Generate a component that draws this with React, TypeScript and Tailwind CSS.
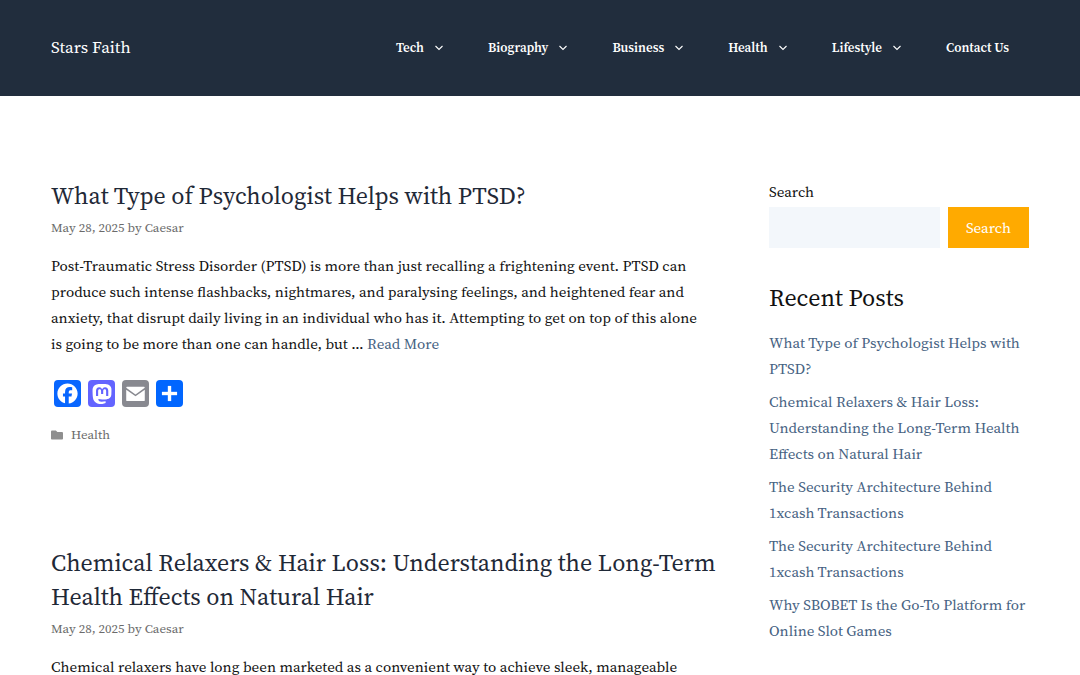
import type { ReactNode } from "react";
import { FaFolder } from "react-icons/fa";
import { SiMastodon } from "react-icons/si";

type Post = {
  title: string;
  date: string;
  author: string;
  excerpt: string;
  category?: string;
};

const menu = [
  { label: "Tech", sub: true },
  { label: "Biography", sub: true },
  { label: "Business", sub: true },
  { label: "Health", sub: true },
  { label: "Lifestyle", sub: true },
  { label: "Contact Us", sub: false },
];

const posts: Post[] = [
  {
    title: "What Type of Psychologist Helps with PTSD?",
    date: "May 28, 2025",
    author: "Caesar",
    excerpt:
      "Post-Traumatic Stress Disorder (PTSD) is more than just recalling a frightening event. PTSD can produce such intense flashbacks, nightmares, and paralysing feelings, and heightened fear and anxiety, that disrupt daily living in an individual who has it. Attempting to get on top of this alone is going to be more than one can handle, but …",
    category: "Health",
  },
  {
    title:
      "Chemical Relaxers & Hair Loss: Understanding the Long-Term Health Effects on Natural Hair",
    date: "May 28, 2025",
    author: "Caesar",
    excerpt:
      "Chemical relaxers have long been marketed as a convenient way to achieve sleek, manageable",
  },
];

const recent = [
  "What Type of Psychologist Helps with PTSD?",
  "Chemical Relaxers & Hair Loss: Understanding the Long-Term Health Effects on Natural Hair",
  "The Security Architecture Behind 1xcash Transactions",
  "The Security Architecture Behind 1xcash Transactions",
  "Why SBOBET Is the Go-To Platform for Online Slot Games",
];

function ShareButton({
  label,
  className,
  children,
}: {
  label: string;
  className: string;
  children: ReactNode;
}) {
  return (
    <a
      href="#"
      aria-label={label}
      className={`flex size-[27px] items-center justify-center rounded text-white ${className}`}
    >
      {children}
    </a>
  );
}

function ShareRow() {
  return (
    <div className="mt-[23px] flex gap-[7px] pl-[3px]">
      <ShareButton label="Facebook" className="bg-[#0866ff]">
        <svg viewBox="0 0 32 32" className="size-full" fill="currentColor">
          <path d="M28 16c0-6.627-5.373-12-12-12S4 9.373 4 16c0 5.628 3.875 10.35 9.101 11.647v-7.98h-2.474V16H13.1v-1.58c0-4.085 1.849-5.978 5.859-5.978.76 0 2.072.15 2.608.298v3.325c-.283-.03-.775-.045-1.386-.045-1.967 0-2.728.745-2.728 2.683V16h3.92l-.673 3.667h-3.247v8.245C23.395 27.195 28 22.135 28 16" />
        </svg>
      </ShareButton>
      <ShareButton label="Mastodon" className="bg-[#6364ff]">
        <SiMastodon className="size-5" />
      </ShareButton>
      <ShareButton label="Email" className="bg-[#888990]">
        <svg viewBox="0 0 32 32" className="size-full" fill="currentColor">
          <path d="M27 21.8V11.6L16 19.400 5 11.600v12.300C5 24.500 5.500 25 6.100 25h19.800c.6 0 1.100-.5 1.100-1.100z" />
          <path d="M5.400 8.200C5.600 8 5.900 8 6.200 8h19.600c.3 0 .6 0 .8.200.3.300.4.700.4 1.100L16 17.200 5 9.300c0-.4.1-.8.400-1.100z" />
        </svg>
      </ShareButton>
      <ShareButton label="Share" className="bg-[#0166ff]">
        <svg viewBox="0 0 32 32" className="size-full" fill="currentColor">
          <path d="M14 7h4v18h-4z" />
          <path d="M7 14h18v4H7z" />
        </svg>
      </ShareButton>
    </div>
  );
}

function PostCard({ post }: { post: Post }) {
  return (
    <article className="mb-[101px] last:mb-0">
      <h2 className="text-2xl leading-[34px] text-[#1f2937]">
        <a href="#">{post.title}</a>
      </h2>
      <div className="mt-[5px] text-[13px] leading-5 text-[#6b6b6b]">
        {post.date} by <a href="#">{post.author}</a>
      </div>
      <p className="mt-[15px] pr-5 text-[15px] leading-[26px]">
        {post.excerpt}{" "}
        {post.category && (
          <a href="#" className="text-[#466282]">
            Read More
          </a>
        )}
      </p>
      {post.category && (
        <>
          <ShareRow />
          <footer className="mt-[18px] flex items-center gap-2 text-[13px] leading-5 text-[#6b6b6b]">
            <FaFolder className="size-3 text-[#8f8f8f]" />
            <a href="#">{post.category}</a>
          </footer>
        </>
      )}
    </article>
  );
}

function Sidebar() {
  return (
    <aside className="w-[260px] shrink-0 text-[15px] leading-[26px]">
      <form onSubmit={e => e.preventDefault()}>
        <label htmlFor="search" className="block">
          Search
        </label>
        <div className="mt-[2px] flex gap-2">
          <input
            id="search"
            type="search"
            className="h-[41px] min-w-0 flex-1 bg-[#f3f7fb] px-3 outline-none"
          />
          <button type="submit" className="h-[41px] w-[81px] bg-[#ffaa00] text-white">
            Search
          </button>
        </div>
      </form>
      <h2 className="mt-8 text-2xl leading-9">Recent Posts</h2>
      <ul className="mt-[14px]">
        {recent.map((title, i) => (
          <li key={i} className="mb-[7px]">
            <a href="#" className="text-[#466282]">
              {title}
            </a>
          </li>
        ))}
      </ul>
    </aside>
  );
}

export default function App() {
  return (
    <div className="bg-white font-['Source_Serif_Pro','Source_Serif_4','Liberation_Serif',serif] text-[#111111]">
      <header className="flex h-24 items-center justify-between bg-[#212d3d] pr-[71px] pl-[51px] text-white">
        <a href="#" className="pb-[2px] text-[17px] leading-6">
          Stars Faith
        </a>
        <nav>
          <ul className="flex gap-11 text-[13px] font-semibold">
            {menu.map(item => (
              <li key={item.label}>
                <a href="#" className="flex items-center gap-[10px]">
                  {item.label}
                  {item.sub && (
                    <svg
                      viewBox="0 0 10 8"
                      className="h-2 w-[10px]"
                      fill="none"
                      stroke="currentColor"
                      strokeWidth="1.1"
                    >
                      <path d="M1.500 2l3.500 3.500L8.500 2" />
                    </svg>
                  )}
                </a>
              </li>
            ))}
          </ul>
        </nav>
      </header>
      <div className="mx-auto flex max-w-[1200px] justify-between px-[51px] pt-[83px]">
        <main className="w-[69%]">
          {posts.map(post => (
            <PostCard key={post.title} post={post} />
          ))}
        </main>
        <Sidebar />
      </div>
    </div>
  );
}
